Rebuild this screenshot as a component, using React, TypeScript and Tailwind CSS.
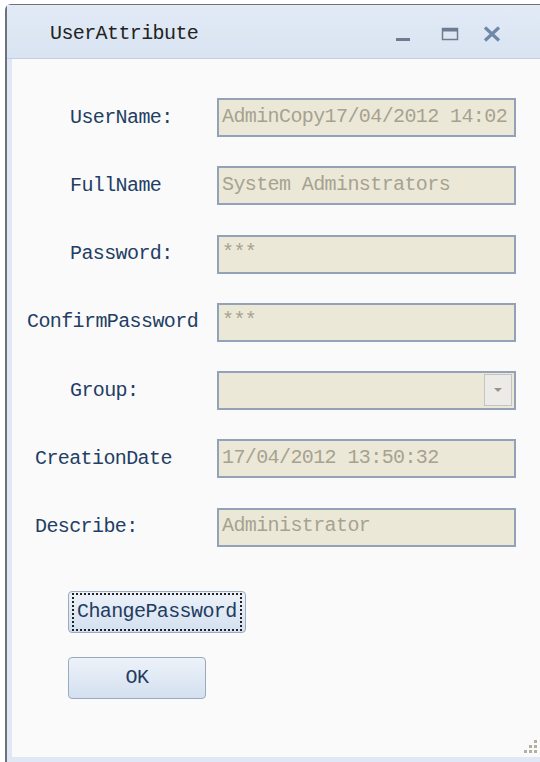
import React from "react";

const mono = "font-['Liberation_Mono','DejaVu_Sans_Mono',monospace] text-[20px] tracking-[-0.6px]";

// form rows: label, value, label indent inside the left column
const fields = [
  { label: "UserName:", value: "AdminCopy17/04/2012 14:02", indent: "pl-[58px]" },
  { label: "FullName", value: "System Adminstrators", indent: "pl-[58px]" },
  { label: "Password:", value: "***", indent: "pl-[58px]" },
  { label: "ConfirmPassword", value: "***", indent: "pl-[15px]" },
  { label: "Group:", value: "", indent: "pl-[58px]", select: true },
  { label: "CreationDate", value: "17/04/2012 13:50:32", indent: "pl-[23px]" },
  { label: "Describe:", value: "Administrator", indent: "pl-[23px]" },
];

const TitleButtons = () => (
  <div className="flex items-center pr-[64px] pt-[4px]">
    {/* minimize */}
    <svg width="16" height="16" viewBox="0 0 16 16">
      <rect x="1" y="12" width="14" height="3" fill="#6f7c8f" />
    </svg>
    {/* maximize */}
    <svg className="ml-[30px]" width="18" height="16" viewBox="0 0 18 16">
      <rect x="1.5" y="2.5" width="15" height="11" fill="none" stroke="#6f7c8f" strokeWidth="1.5" />
      <rect x="1" y="2" width="16" height="3.5" fill="#6f7c8f" />
    </svg>
    {/* close */}
    <svg className="ml-[24px]" width="18" height="16" viewBox="0 0 18 16">
      <path d="M2 1.5 L16 14.5 M16 1.5 L2 14.5" stroke="#6f88a8" strokeWidth="3.2" />
    </svg>
  </div>
);

const Field = ({ value, select }: { value: string; select?: boolean }) => (
  <div className="relative w-[299px] h-[39px] border-2 border-[#94a2b8] bg-[#ece8d8] flex items-center pl-[3px]">
    <span className={`${mono} text-[#a6a290] leading-none -mt-[2px]`}>{value}</span>
    {select && (
      <div className="absolute right-[2px] top-[1px] w-[28px] h-[32px] border border-[#c4c4c4] bg-[#ecebe8] flex items-center justify-center">
        <svg width="10" height="6" viewBox="0 0 10 6">
          <path d="M1 1 L9 1 L5 5 Z" fill="#9a9583" />
        </svg>
      </div>
    )}
  </div>
);

export default function App() {
  return (
    <div className="w-[540px] h-[762px] bg-white overflow-hidden pt-[4px] pl-[5px]">
      <div className="h-[758px] w-[560px] flex flex-col border-l-2 border-t border-[#6e727a] rounded-tl-[6px] bg-[#dfe8f4]">
        {/* title bar */}
        <div className="h-[54px] shrink-0 flex items-center justify-between bg-gradient-to-b from-[#e2eaf6] to-[#d9e4f2] border-b border-[#c2cfe0]">
          <span className={`${mono} text-[#222] pl-[43px] pt-[4px]`}>UserAttribute</span>
          <TitleButtons />
        </div>

        {/* body */}
        <div className="relative flex-1 ml-[5px] mb-[5px] bg-[#fafafa] pt-[39px]">
          <div className="flex flex-col gap-[29.3px]">
            {fields.map((f) => (
              <div key={f.label} className="flex items-center">
                <div className={`w-[205px] ${f.indent}`}>
                  <span className={`${mono} text-[#233e64]`}>{f.label}</span>
                </div>
                <Field value={f.value} select={f.select} />
              </div>
            ))}
          </div>

          <div className="flex flex-col items-start gap-[24px] pl-[56px] mt-[44px]">
            <button className="h-[42px] px-[3px] rounded-[4px] border border-[#9aaabf] bg-gradient-to-b from-[#edf2f9] to-[#d4e0f0]">
              <span className={`${mono} text-[#223b5e] block px-[3px] py-[2px] border-2 border-dotted border-[#222]`}>ChangePassword</span>
            </button>
            <button className={`${mono} w-[138px] h-[42px] rounded-[4px] border border-[#9aaabf] bg-gradient-to-b from-[#edf2f9] to-[#d4e0f0] text-[#223b5e]`}>
              OK
            </button>
          </div>

          {/* resize grip */}
          <svg className="absolute right-[27px] bottom-[1px]" width="18" height="18" viewBox="0 0 18 18">
            {[
              [14, 2],
              [9, 7],
              [14, 7],
              [4, 12],
              [9, 12],
              [14, 12],
            ].map(([x, y]) => (
              <rect key={`${x}-${y}`} x={x} y={y} width="3" height="3" fill="#b4b09c" />
            ))}
          </svg>
        </div>
      </div>
    </div>
  );
}
